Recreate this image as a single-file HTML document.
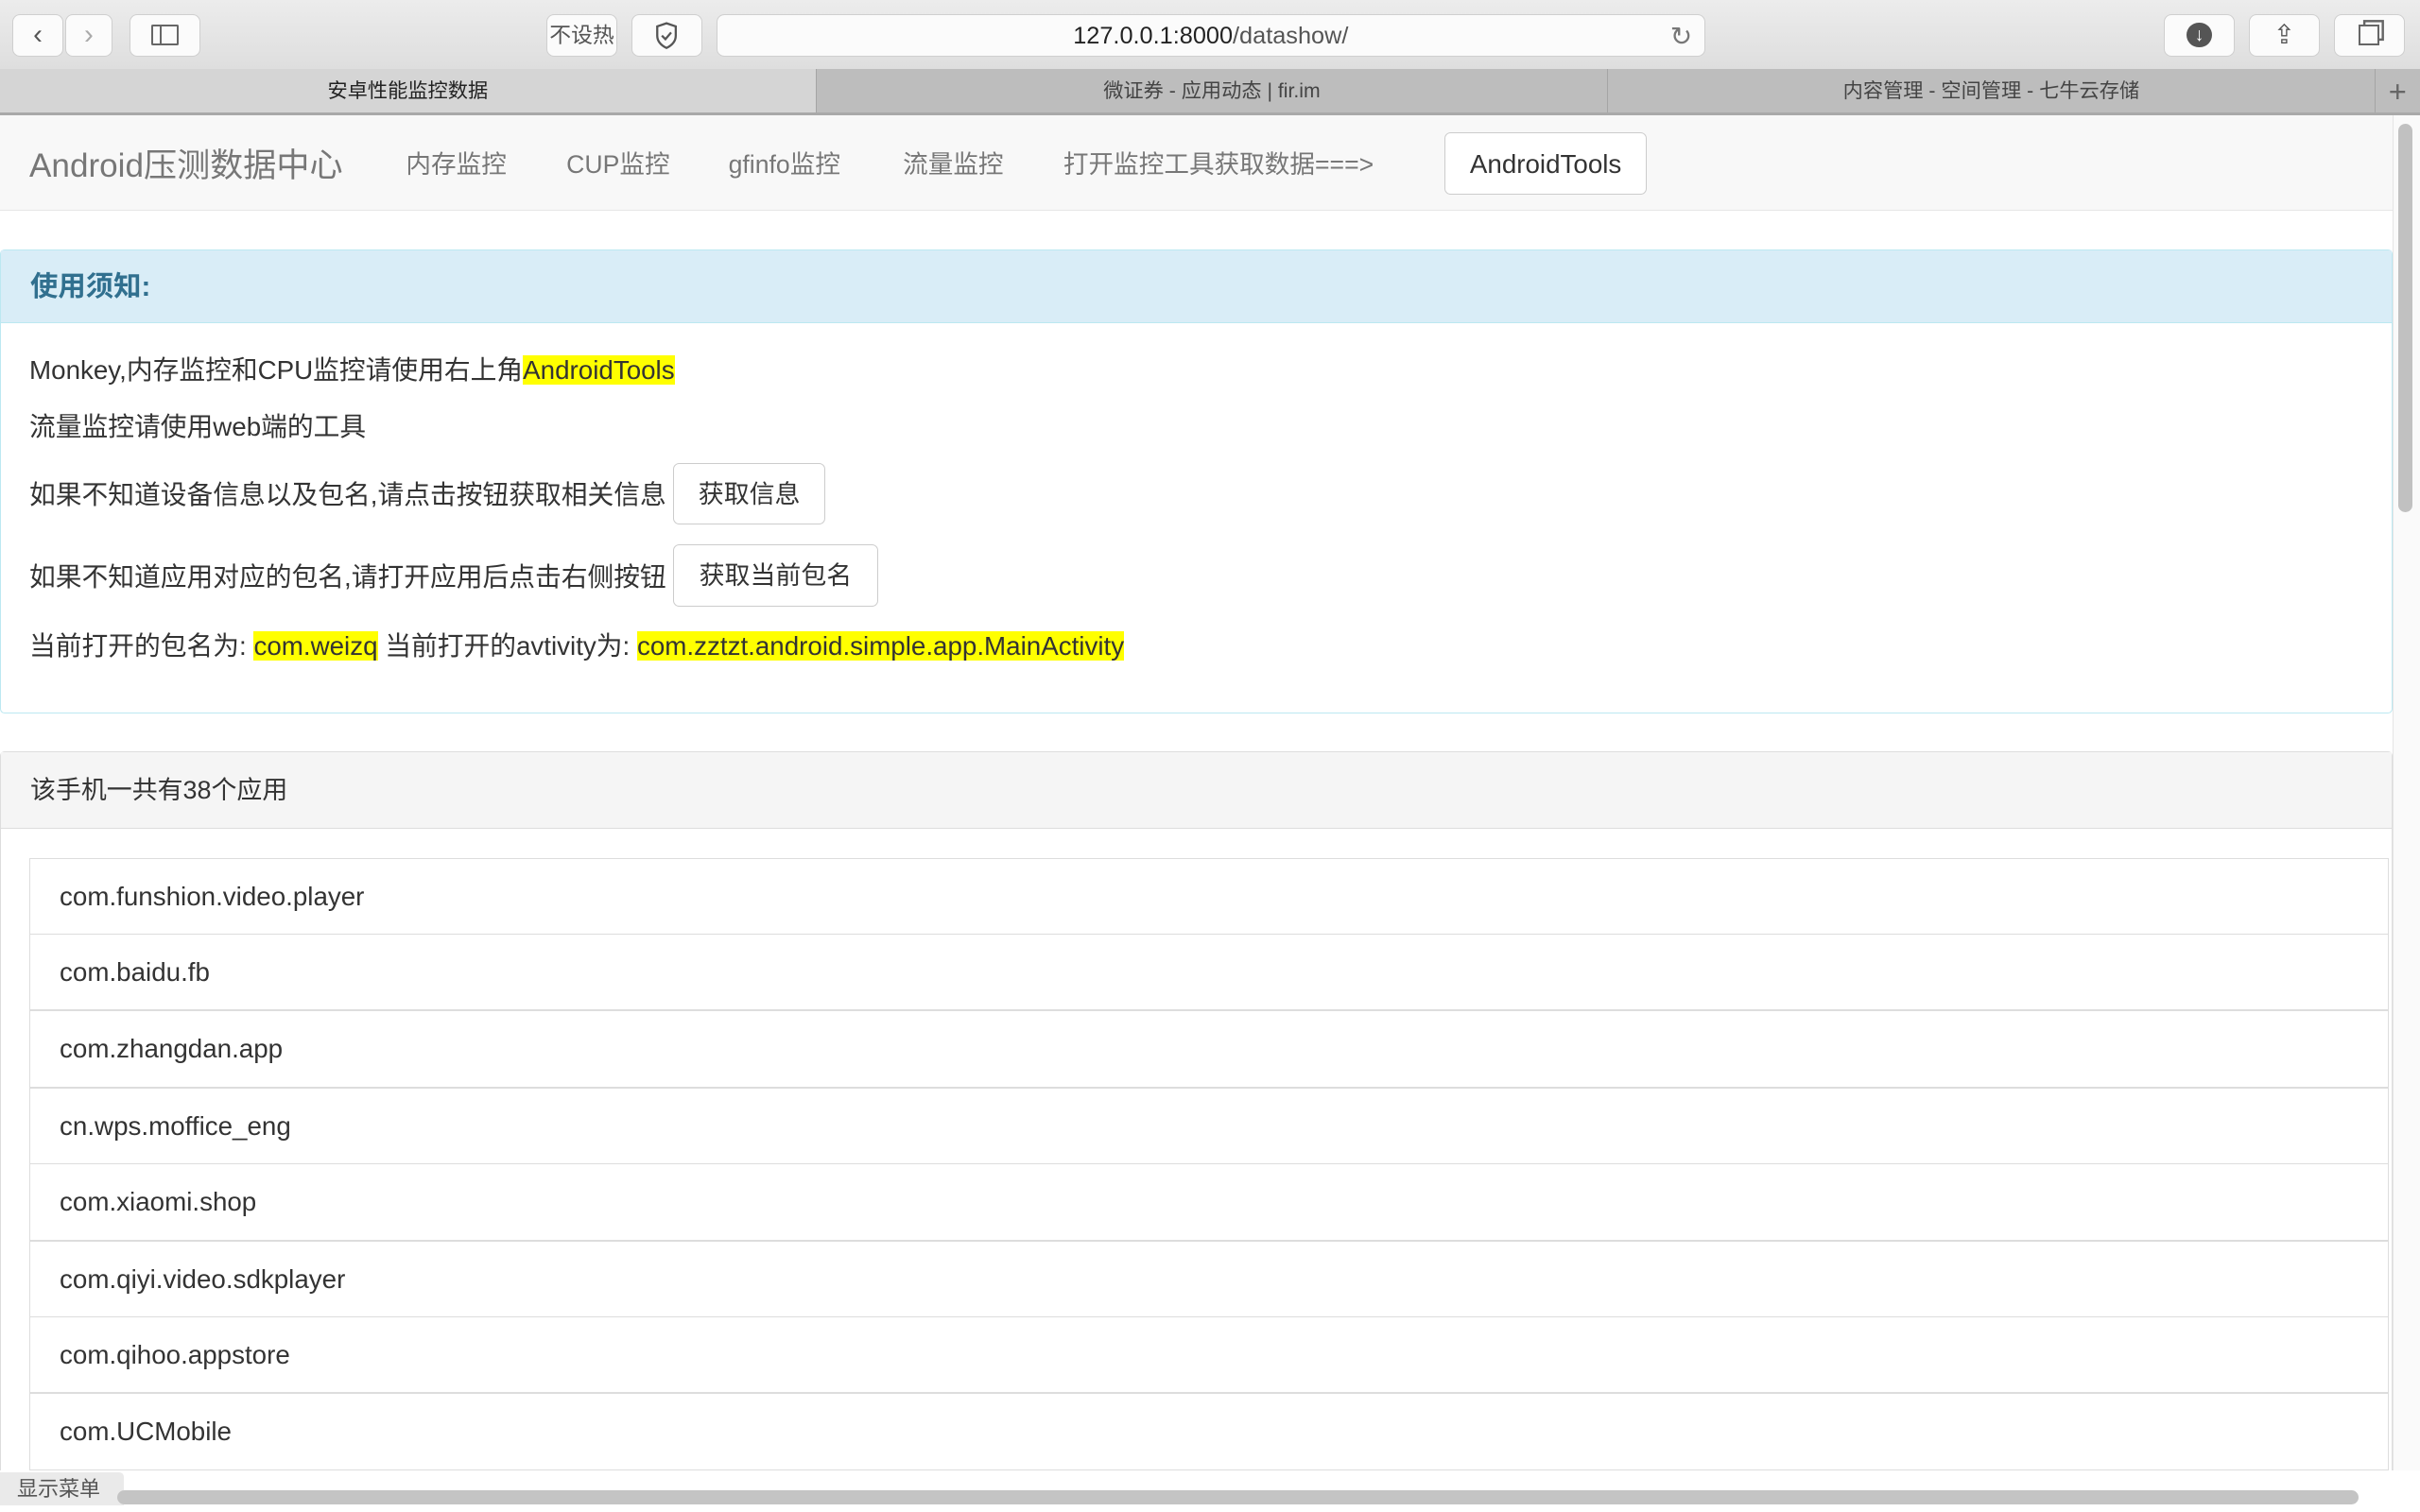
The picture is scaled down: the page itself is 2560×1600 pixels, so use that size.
<!DOCTYPE html>
<html><head><meta charset="utf-8"><style>
html,body{margin:0;padding:0;width:2560px;height:1600px;overflow:hidden;background:#fff}
#w{zoom:1.632653;width:1568px;height:980px;position:relative;font-family:"Liberation Sans","Noto Sans CJK SC",sans-serif;color:#333;overflow:hidden}
.a{position:absolute}
.tb{left:0;top:0;width:1568px;height:45px;background:linear-gradient(#ececec,#dedede);border-bottom:1px solid #b9b9b9}
.btn{position:absolute;top:9px;height:28px;background:#fbfbfb;border:1px solid #cfcfcf;border-radius:5px;box-sizing:border-box;color:#555;font-size:15px;text-align:center;line-height:26px}
.tabs{left:0;top:45px;width:1568px;height:28px;background:#bdbdbd;border-bottom:2px solid #a9a9a9}
.tab{position:absolute;top:0;height:28px;line-height:29px;text-align:center;font-size:13px;color:#444;border-right:1px solid #a5a5a5;box-sizing:border-box}
.nav{left:0;top:75px;width:1550px;height:61px;background:#f8f8f8;border-bottom:1px solid #e7e7e7}
.nav span{position:absolute;top:19px;font-size:16.3px;color:#777}
.p1{left:0;top:162px;width:1549px;height:299px;border:1px solid #bce8f1;border-radius:3px}
.p1 .h{height:46px;background:#d9edf7;border-bottom:1px solid #bce8f1;color:#31708f;font-weight:bold;font-size:18px;line-height:48px;padding-left:19px}
.t{position:absolute;left:19px;font-size:17px;color:#333}
.hl{background:#ff0}
.b2{position:absolute;height:40px;border:1px solid #ccc;border-radius:4px;box-sizing:border-box;background:#fff;font-size:16.5px;line-height:40px;text-align:center}
.p2{left:0;top:487px;width:1549px;height:520px;border:1px solid #ddd;border-radius:3px}
.p2 .h{height:49px;background:#f5f5f5;border-bottom:1px solid #ddd;font-size:16.5px;line-height:49px;padding-left:19px}
.li{position:absolute;left:19px;width:1529px;height:50px;border:1px solid #ddd;box-sizing:border-box;font-size:17px;line-height:49px;padding-left:19px;background:#fff}
</style></head><body><div id="w">
<div class="a tb"></div>
<div class="btn" style="left:8px;width:33px;font-size:18px">&#x2039;</div>
<div class="btn" style="left:42px;width:31px;font-size:18px;color:#aaa">&#x203A;</div>
<div class="btn" style="left:84px;width:46px"><span style="display:inline-block;width:15px;height:11px;border:1.5px solid #666;border-radius:1px;vertical-align:middle;position:relative"><span style="position:absolute;left:4px;top:0;height:11px;border-left:1.5px solid #666"></span></span></div>
<div class="btn" style="left:354px;width:46px;font-size:14px">不设热</div>
<div class="btn" style="left:409px;width:46px"><svg width="16" height="18" viewBox="0 0 16 18" style="vertical-align:middle"><path d="M8 1 L14 3 L14 9 C14 13 11 15.5 8 17 C5 15.5 2 13 2 9 L2 3 Z" fill="none" stroke="#555" stroke-width="1.4"/><path d="M5 9 L7.3 11.3 L11 7" fill="none" stroke="#555" stroke-width="1.4"/></svg></div>
<div class="btn" style="left:464px;width:641px;font-size:15.5px;color:#222;line-height:28px">127.0.0.1:8000<span style="color:#555">/datashow/</span><span style="position:absolute;right:8px;top:0;color:#777;font-size:17px">&#x21BB;</span></div>
<div class="btn" style="left:1402px;width:46px"><span style="display:inline-block;width:16px;height:16px;border-radius:50%;background:#555;color:#fff;font-size:12px;line-height:16px;vertical-align:middle">&#x2193;</span></div>
<div class="btn" style="left:1457px;width:46px;font-size:17px">&#x21EA;</div>
<div class="btn" style="left:1512px;width:46px"><span style="display:inline-block;width:11px;height:11px;border:1.5px solid #666;vertical-align:middle;box-shadow:3px -3px 0 -1.5px #fbfbfb,3px -3px 0 0 #666"></span></div>
<div class="a tabs">
<div class="tab" style="left:0;width:529px;background:#d5d5d5;color:#222">安卓性能监控数据</div>
<div class="tab" style="left:529px;width:513px">微证券 - 应用动态 | fir.im</div>
<div class="tab" style="left:1042px;width:497px">内容管理 - 空间管理 - 七牛云存储</div>
<div class="tab" style="left:1539px;width:29px;font-size:20px;border:none;color:#666">+</div>
</div>
<div class="a nav">
<span style="left:19px;top:15px;font-size:21.5px">Android压测数据中心</span>
<span style="left:263px;top:18px">内存监控</span>
<span style="left:367px;top:18px">CUP监控</span>
<span style="left:472px;top:18px">gfinfo监控</span>
<span style="left:585px;top:18px">流量监控</span>
<span style="left:689px;top:18px">打开监控工具获取数据===&gt;</span>
<div class="b2" style="left:936px;top:11px;width:131px;color:#333;font-size:17px">AndroidTools</div>
</div>
<div class="a" style="left:1550px;top:75px;width:18px;height:890px;background:#fafafa;border-left:1px solid #e5e5e5"></div>
<div class="a" style="left:1554px;top:80px;width:9px;height:252px;background:#c1c1c1;border-radius:5px"></div>
<div class="a p1"><div class="h">使用须知:</div></div>
<div class="t" style="top:226px">Monkey,内存监控和CPU监控请使用右上角<span class="hl">AndroidTools</span></div>
<div class="t" style="top:263px">流量监控请使用web端的工具</div>
<div class="t" style="top:307px">如果不知道设备信息以及包名,请点击按钮获取相关信息</div>
<div class="b2" style="left:436px;top:300px;width:99px">获取信息</div>
<div class="t" style="top:360px">如果不知道应用对应的包名,请打开应用后点击右侧按钮</div>
<div class="b2" style="left:436px;top:353px;width:133px">获取当前包名</div>
<div class="t" style="top:405px">当前打开的包名为: <span class="hl">com.weizq</span> 当前打开的avtivity为: <span class="hl">com.zztzt.android.simple.app.MainActivity</span></div>
<div class="a p2"><div class="h">该手机一共有38个应用</div></div>
<div class="li" style="top:556px">com.funshion.video.player</div>
<div class="li" style="top:605px">com.baidu.fb</div>
<div class="li" style="top:655px">com.zhangdan.app</div>
<div class="li" style="top:705px">cn.wps.moffice_eng</div>
<div class="li" style="top:754px">com.xiaomi.shop</div>
<div class="li" style="top:804px">com.qiyi.video.sdkplayer</div>
<div class="li" style="top:853px">com.qihoo.appstore</div>
<div class="li" style="top:903px">com.UCMobile</div>
<div class="a" style="left:0;top:953px;width:1568px;height:27px;background:#fff"></div>
<div class="a" style="left:0;top:954px;width:80px;height:22px;background:#eaeaea;font-size:13.5px;color:#555;line-height:22px;padding-left:11px;box-sizing:border-box;border-radius:0 3px 0 0">显示菜单</div>
<div class="a" style="left:76px;top:966px;width:1452px;height:9px;background:#c4c4c4;border-radius:5px"></div>
</div></body></html>
